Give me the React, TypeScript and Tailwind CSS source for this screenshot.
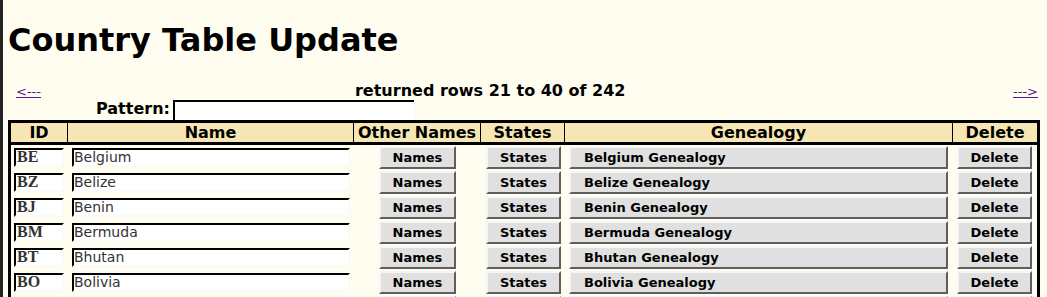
import React from 'react'

const rows = [
  { id: 'BE', name: 'Belgium' },
  { id: 'BZ', name: 'Belize' },
  { id: 'BJ', name: 'Benin' },
  { id: 'BM', name: 'Bermuda' },
  { id: 'BT', name: 'Bhutan' },
  { id: 'BO', name: 'Bolivia' },
  { id: 'BA', name: 'Bosnia and Herzegovina' },
]

const btn =
  'h-[23px] bg-[#e0e0e0] border-2 border-t-[#f6f6f6] border-l-[#f6f6f6] border-b-[#5e5e5e] border-r-[#5e5e5e] text-[13px] font-bold text-black leading-none'

const inp =
  'h-[19px] mt-[2px] bg-white border-2 border-t-black border-l-black border-b-[#fbfbf6] border-r-[#fbfbf6] text-[#333] outline-none'

const App = () => {
  return (
    <div
      className="h-[297px] overflow-hidden bg-[#fffcf0] border-l-[3px] border-[#232323] pl-[5px] pr-[7px] text-black"
      style={{ fontFamily: '"DejaVu Sans", sans-serif' }}
    >
      {/* Title */}
      <h1 className="text-[32px] font-bold leading-[37px] mt-[22px] mb-[21px]">Country Table Update</h1>

      {/* Paging row */}
      <div className="flex items-baseline h-[20px] pt-[1px] leading-[19px]">
        <a href="#" className="ml-2 text-[13px] text-[#551a8b] underline">&lt;---</a>
        <span className="ml-[314px] text-[16px] font-bold">returned rows 21 to 40 of 242</span>
        <span className="flex-1" />
        <a href="#" className="mr-[2px] text-[13px] text-[#551a8b] underline">---&gt;</a>
      </div>

      {/* Pattern row */}
      <div className="flex items-start h-[20px]">
        <span className="ml-[88px] text-[16px] font-bold leading-[19px] -mt-[1px]">Pattern:</span>
        <input
          className="ml-[3px] w-[241px] h-[20px] bg-white border-t-2 border-l-2 border-black outline-none"
          defaultValue=""
        />
      </div>

      {/* Table */}
      <div className="w-[1032px] border-[3px] border-black">
        <div className="grid grid-cols-[56px_286px_127px_84px_388px_85px] h-[22px] bg-[#f5e6b4] border-b-[3px] border-black text-[16px] font-bold leading-[19px] text-center">
          <div>ID</div>
          <div className="border-l border-black">Name</div>
          <div className="border-l border-black">Other Names</div>
          <div className="border-l border-black">States</div>
          <div className="border-l border-black">Genealogy</div>
          <div className="border-l border-black">Delete</div>
        </div>

        {rows.map((r) => (
          <div key={r.id} className="grid grid-cols-[56px_286px_127px_84px_388px_85px] h-[25px] items-start">
            <div className="pl-[3px]">
              <input
                className={`${inp} w-[50px] pl-[1px] text-[16px] font-bold`}
                style={{ fontFamily: '"Liberation Serif", serif' }}
                defaultValue={r.id}
              />
            </div>
            <div className="pl-[5px]">
              <input className={`${inp} w-[278px] text-[14px]`} defaultValue={r.name} />
            </div>
            <div className="pl-[26px]">
              <button className={`${btn} w-[77px]`}>Names</button>
            </div>
            <div className="pl-[6px]">
              <button className={`${btn} w-[75px]`}>States</button>
            </div>
            <div className="pl-[5px]">
              <button className={`${btn} w-[379px] text-left pl-[13px]`}>{r.name} Genealogy</button>
            </div>
            <div className="pl-[5px]">
              <button className={`${btn} w-[75px]`}>Delete</button>
            </div>
          </div>
        ))}
      </div>
    </div>
  )
}

export default App
